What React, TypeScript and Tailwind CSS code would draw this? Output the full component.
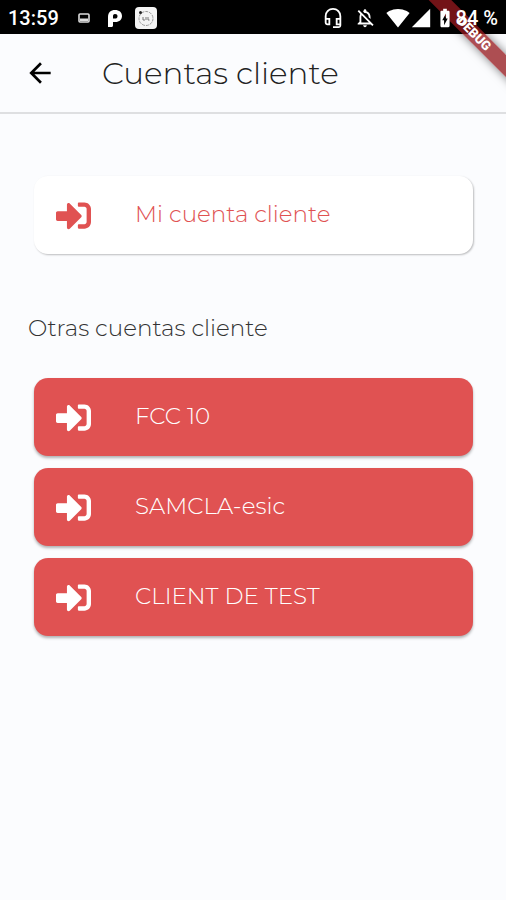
import { FaSignInAlt } from "react-icons/fa";
import {
  MdArrowBack,
  MdBatteryChargingFull,
  MdOutlineHeadsetMic,
  MdOutlineNotificationsOff,
  MdSignalCellular4Bar,
  MdSignalWifi4Bar,
} from "react-icons/md";

interface AccountButtonProps {
  name: string;
  own?: boolean;
}

const otherAccounts = ["FCC 10", "SAMCLA-esic", "CLIENT DE TEST"];

function StatusBar() {
  return (
    <div className="flex h-[34px] items-center justify-between bg-black px-2 pt-0.5 font-[Roboto,sans-serif] text-[20px] font-medium text-white">
      <div className="flex items-center">
        <span className="w-[70px]">13:59</span>
        <svg className="h-[10px] w-3" viewBox="0 0 12 10">
          <rect x="1" y="1" width="10" height="8" rx="1" fill="none" stroke="#ddd" strokeWidth="1.6" />
          <path d="M2 5.500h8v2.500H2z" fill="#ddd" />
        </svg>
        <svg className="ml-[17px] h-[18px] w-4" viewBox="0 0 16 18">
          <path
            d="M1 18V8C1 3.500 3.800 1 8 1s7 2.300 7 6-2.800 6-6.500 6H6v3.500C6 17.500 5 18 4 18zM6 9.500h2c1.600 0 2.500-.9 2.500-2.300S9.600 5 8 5 6 6 6 7.500z"
            fill="white"
            fillRule="evenodd"
          />
        </svg>
        <svg className="ml-3 size-[22px]" viewBox="0 0 22 22">
          <rect width="22" height="22" rx="4" fill="#f4f4f4" />
          <circle cx="11" cy="11.500" r="7" fill="none" stroke="#999" strokeDasharray="3 1" />
          <circle cx="5.500" cy="5.500" r="1.500" fill="#222" />
          <path d="M8 10v3h2M11 10v3M13 10v3h1.500" fill="none" stroke="#777" />
        </svg>
      </div>
      <div className="flex items-center">
        <MdOutlineHeadsetMic className="size-[22px]" />
        <MdOutlineNotificationsOff className="ml-2.5 size-[22px]" />
        <MdSignalWifi4Bar className="ml-2.5 size-6" />
        <MdSignalCellular4Bar className="size-[22px]" />
        <MdBatteryChargingFull className="relative z-20 ml-0.5 size-[22px]" />
        <span className="relative z-20">84 %</span>
      </div>
    </div>
  );
}

function DebugRibbon() {
  return (
    <div className="pointer-events-none absolute top-0 right-0 z-10 size-28 overflow-hidden">
      <div className="absolute top-[26px] -right-12 flex h-4 w-40 rotate-45 items-center justify-center bg-[#95191e]/77 font-[Roboto,sans-serif] text-[13px] font-black text-white shadow-[0_0_10px_rgba(0,0,0,0.5)]">
        DEBUG
      </div>
    </div>
  );
}

function AccountButton({ name, own }: AccountButtonProps) {
  return (
    <button
      type="button"
      className={`flex h-[78px] w-full items-center rounded-[14px] pl-[22px] text-left text-[23px] ${
        own
          ? "bg-white text-[#e05252] shadow-[1px_1px_2px_rgba(0,0,0,0.25)]"
          : "bg-[#e05252] text-white shadow-[0_2px_3px_rgba(0,0,0,0.3)]"
      }`}
    >
      <FaSignInAlt className="size-[35px]" />
      <span className="ml-[44px] pb-0.5">{name}</span>
    </button>
  );
}

export default function App() {
  return (
    <div className="relative min-h-screen overflow-hidden bg-[#fbfcfe] font-[Montserrat,Inter,sans-serif] font-light">
      <StatusBar />
      <DebugRibbon />
      <header className="flex h-20 items-center border-b-2 border-[#dedfe1] pl-6">
        <button type="button" aria-label="Volver" className="text-black">
          <MdArrowBack className="size-8" />
        </button>
        <h1 className="ml-[46px] text-[31px] text-[#222]">Cuentas cliente</h1>
      </header>
      <main className="pt-[62px] pr-[33px] pl-[34px]">
        <AccountButton name="Mi cuenta cliente" own />
        <h2 className="-ml-1.5 mt-[58px] text-[23px] leading-8 text-[#333]">
          Otras cuentas cliente
        </h2>
        <div className="mt-[34px] flex flex-col gap-3">
          {otherAccounts.map((name) => (
            <AccountButton key={name} name={name} />
          ))}
        </div>
      </main>
    </div>
  );
}
